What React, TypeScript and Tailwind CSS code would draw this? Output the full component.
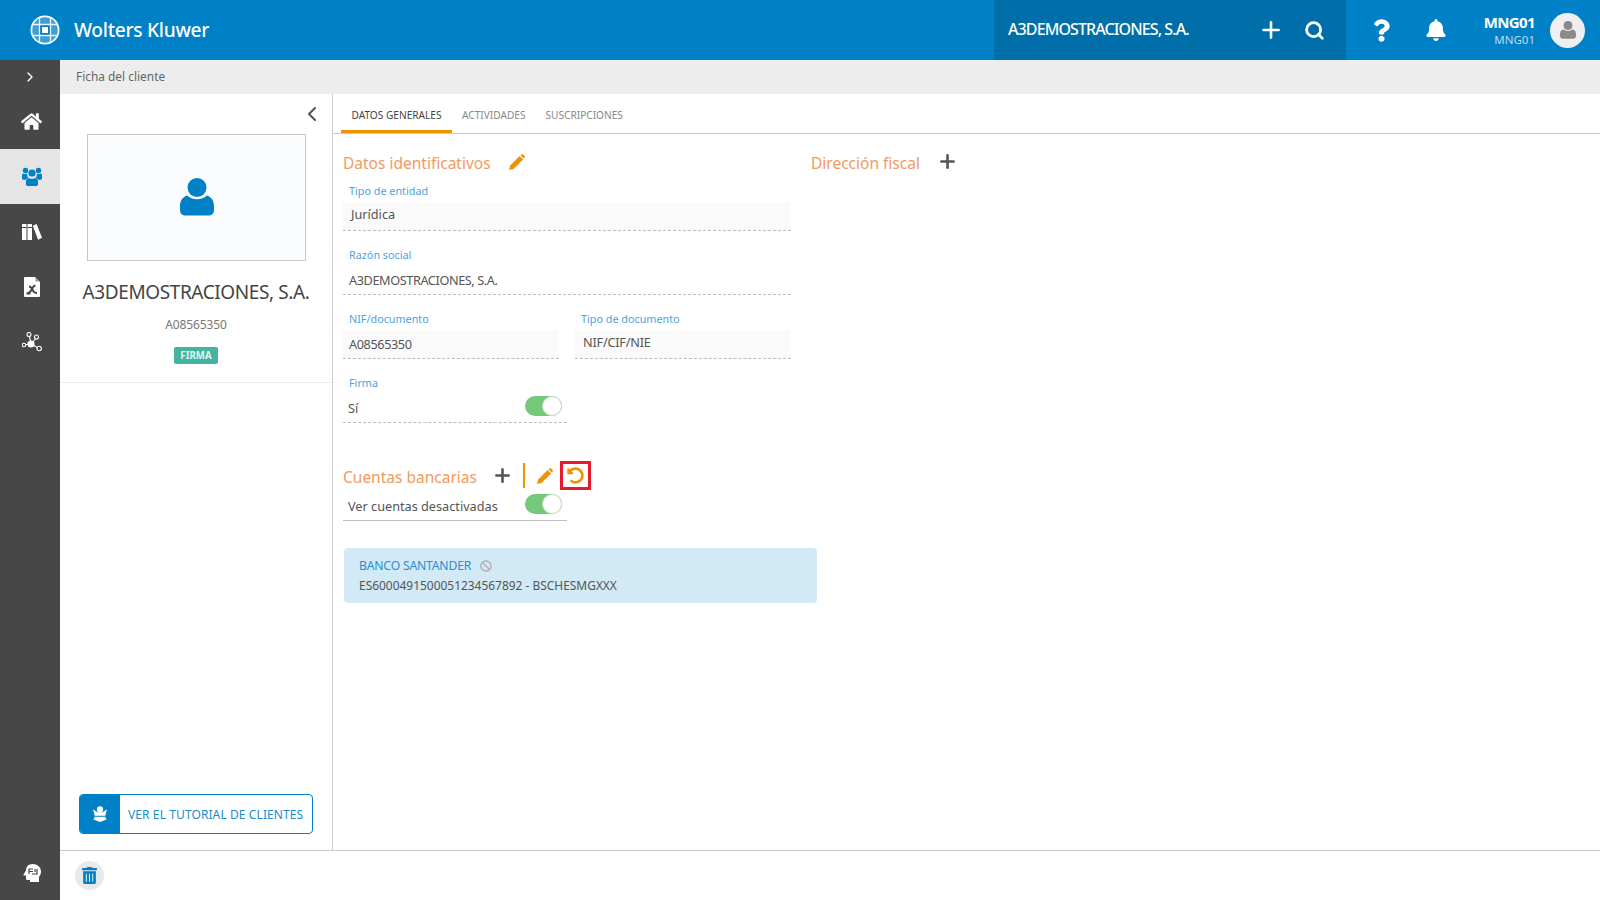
import { ChevronLeft, ChevronRight, Plus, Search } from "lucide-react";
import { FaBan, FaBell, FaHome, FaQuestion, FaTrashAlt, FaUndoAlt } from "react-icons/fa";

function UserGlyph({ className }: { className?: string }) {
  return (
    <svg viewBox="0 0 34 38" className={className} fill="currentColor">
      <circle cx="17" cy="9.5" r="9.5" />
      <path d="M7 17.5c2.5 2.4 6 3.7 10 3.7s7.500-1.300 10-3.700c4 1.300 7 4.800 7 10.500v4c0 3.300-2.200 5.500-5.500 5.500h-23C2.200 37.500 0 35.300 0 32v-4c0-5.700 3-9.200 7-10.500z" />
    </svg>
  );
}

function Logo() {
  return (
    <svg viewBox="0 0 30 30" className="h-[30px] w-[30px]">
      <circle cx="15" cy="15" r="14.500" fill="#fff" />
      <circle cx="15" cy="15" r="12.800" fill="#3d9fd6" />
      <rect x="9.500" y="9.500" width="11" height="11" fill="#0a78bb" />
      <rect x="12" y="12" width="6" height="6" fill="#fff" />
      <path d="M9.500 2v26M20.500 2v26M2 9.500h26M2 20.500h26" stroke="#e8f4fb" strokeWidth="1.300" />
    </svg>
  );
}

function UsersIcon() {
  return (
    <svg viewBox="0 0 20 19" className="h-[19px] w-[20px]" fill="#0080c6">
      <circle cx="3.500" cy="3.500" r="2.700" />
      <circle cx="16.500" cy="3.500" r="2.700" />
      <circle cx="10" cy="6" r="3.600" />
      <path d="M0 8.300c0-1 .7-1.800 1.700-1.800.9.700 2.600.700 3.500.2-.3 1.600.2 3.100 1.100 4.100-1 .3-1.800 1-2.200 1.900H1.500A1.500 1.500 0 0 1 0 11.200zM20 8.300c0-1-.7-1.800-1.700-1.800-.9.700-2.600.700-3.500.2.300 1.600-.2 3.100-1.100 4.100 1 .3 1.800 1 2.200 1.900h2.600a1.500 1.500 0 0 0 1.500-1.500z" />
      <path d="M6.700 10.900c1.800 1.200 4.800 1.200 6.600 0 1.600.4 2.700 1.800 2.700 3.500v2.800c0 1-.8 1.800-1.800 1.800H5.800c-1 0-1.800-.8-1.800-1.800v-2.800c0-1.700 1.100-3.100 2.700-3.500z" />
    </svg>
  );
}

function BooksIcon() {
  return (
    <svg viewBox="0 0 20 16" className="h-[16px] w-[20px]" fill="#fff">
      <rect x="0" y="0" width="4.500" height="16" rx="0.500" />
      <rect x="5.500" y="0" width="4.500" height="16" rx="0.500" />
      <path d="M10.800 1.800 14.600 0l5.400 13.800-3.900 2z" />
      <rect x="0" y="3" width="4.500" height="1" fill="#474747" />
      <rect x="5.500" y="3" width="4.500" height="1" fill="#474747" />
    </svg>
  );
}

function DocIcon() {
  return (
    <svg viewBox="0 0 16 20" className="h-[20px] w-[16px]">
      <path d="M1 0h10l5 5v14a1 1 0 0 1-1 1H1a1 1 0 0 1-1-1V1a1 1 0 0 1 1-1z" fill="#fff" />
      <path d="M11.500 .5 15.500 4.500h-4z" fill="#999" />
      <path d="M2.500 16.500c3 0 4.500-2 6-5.500.6-1.300 1.300-2.500 3-2.500M5 9.500c2.500 0 3.500 3.500 4.500 5 .5.800 1.500 1.500 3.500 1.500M2.500 16.500h4" fill="none" stroke="#474747" strokeWidth="2" />
    </svg>
  );
}

function NetworkIcon() {
  return (
    <svg viewBox="0 0 20 20" className="h-[20px] w-[20px]" fill="none" stroke="#fff" strokeWidth="1.100">
      <circle cx="9" cy="12" r="3" fill="#fff" />
      <circle cx="7" cy="2.500" r="2" />
      <circle cx="14.500" cy="5" r="2" />
      <circle cx="2" cy="13" r="1.800" />
      <circle cx="17.200" cy="16.500" r="2.200" />
      <path d="M7.400 4.500 8.500 9M13.400 6.700 11 10M3.800 12.800 6 12.300M11.700 13.300 15.300 15.600" />
    </svg>
  );
}

function HeadIcon() {
  return (
    <svg viewBox="0 0 18 18" className="h-[18px] w-[18px]">
      <path d="M9.500 0C5.500 0 3 2.800 3 6.500L.5 10.500c-.3.500 0 1 .5 1h2v3c0 1 .8 1.500 1.500 1.500H7v2h9v-5c1.300-1.400 2-3.300 2-5.500C18 3.300 14.500 0 9.500 0z" fill="#fff" />
      <path d="M6 10V5h4M9 10h5V5M12 5v3M6 7.500h4" fill="none" stroke="#474747" strokeWidth="1.200" />
    </svg>
  );
}

function TutorialIcon() {
  return (
    <svg viewBox="0 0 16 18" className="h-[16px] w-[14px]" fill="#fff">
      <circle cx="8" cy="3.800" r="3.600" />
      <path d="M0 3.500 5 7h6l5-3.500L14 11H2z" />
      <path d="M2 12h5.500l.5.600.5-.6H14l1.500 3.200L8 18 .5 15.200z" />
    </svg>
  );
}

function Pencil() {
  return (
    <svg viewBox="0 0 16 16" className="h-[16px] w-[16px]" fill="#f39200">
      <path d="M0 16l1.100-4.600L10.600 1.900l3.500 3.500L4.600 14.900z" />
      <path d="M12 .7c.7-.7 1.600-.7 2.200-.1l1.200 1.200c.6.600.6 1.500-.1 2.200l-.6.6-3.300-3.300z" />
    </svg>
  );
}

function Toggle() {
  return (
    <div className="flex h-[20px] w-[37px] items-center justify-end rounded-full bg-[#74c97a]">
      <div className="h-[20px] w-[20px] rounded-full border border-[#c9dfca] bg-white" />
    </div>
  );
}

function Field({ label, value, filled, width, valueClass }: { label: string; value: string; filled?: boolean; width: string; valueClass: string }) {
  return (
    <div className={width}>
      <div className="h-[16px] pl-[6px] text-[10.800px] leading-[16px] text-[#4ba3de]">{label}</div>
      <div className={`mt-[3px] h-[29px] border-b border-dashed border-[#bdbdbd] text-[#555] ${filled ? "bg-[#fafafa]" : ""} ${valueClass}`}>
        {value}
      </div>
    </div>
  );
}

const navItems = [
  { icon: <FaHome className="h-[21px] w-[21px] text-white" />, active: false },
  { icon: <UsersIcon />, active: true },
  { icon: <BooksIcon />, active: false },
  { icon: <DocIcon />, active: false },
  { icon: <NetworkIcon />, active: false },
];

export default function App() {
  return (
    <div className="flex h-screen w-full flex-col overflow-hidden bg-white font-['Noto_Sans',sans-serif]">
      {/* Header */}
      <header className="flex h-[60px] shrink-0 items-center bg-[#0080c6] text-white">
        <div className="ml-[30px]"><Logo /></div>
        <div className="ml-[14px] text-[19.200px] font-medium tracking-[-0.3px]">Wolters Kluwer</div>
        <div className="ml-auto flex h-full w-[352px] items-center bg-[#006fa9] pl-[14px]">
          <span className="mb-[2px] w-[250px] text-[16px] font-medium tracking-[-0.9px]">A3DEMOSTRACIONES, S.A.</span>
          <Plus className="h-[26px] w-[26px]" strokeWidth={2.400} />
          <Search className="ml-[20px] h-[21px] w-[21px]" strokeWidth={3.200} />
        </div>
        <FaQuestion className="ml-[27px] h-[23px] w-[17px]" />
        <FaBell className="ml-[36px] h-[22px] w-[20px]" />
        <div className="ml-[10px] w-[79px] text-right">
          <div className="mb-[1px] text-[15px] font-bold leading-[18px] tracking-[-0.6px]">MNG01</div>
          <div className="mt-[1px] text-[11.500px] leading-[16px] text-[#bfdcee]">MNG01</div>
        </div>
        <div className="ml-[15px] mr-[15px] flex h-[35px] w-[35px] items-center justify-center rounded-full bg-[#efefef]">
          <UserGlyph className="h-[18px] w-[16px] text-[#8a8a8a]" />
        </div>
      </header>

      <div className="flex min-h-0 flex-1">
        {/* Sidebar */}
        <aside className="flex w-[60px] shrink-0 flex-col bg-[#474747]">
          <div className="flex h-[34px] items-center justify-center">
            <ChevronRight className="h-[16px] w-[16px] text-white" />
          </div>
          {navItems.map((n, i) => (
            <div key={i} className={`flex h-[55px] items-center justify-center pl-[3px] ${n.active ? "bg-[#e5e5e5]" : ""}`}>
              {n.icon}
            </div>
          ))}
          <div className="mt-auto flex h-[55px] items-center justify-center pl-[3px]">
            <HeadIcon />
          </div>
        </aside>

        <div className="flex min-w-0 flex-1 flex-col">
          <div className="flex h-[34px] shrink-0 items-center bg-[#ededed] pl-[16px] text-[11.900px] text-[#666]">Ficha del cliente</div>

          <div className="flex min-h-0 flex-1">
            {/* Client panel */}
            <section className="flex w-[273px] shrink-0 flex-col border-r border-[#ccc]">
              <div className="border-b border-[#eee] pb-[18px]">
                <div className="flex h-[40px] items-center justify-end pr-[8px]">
                  <ChevronLeft className="h-[24px] w-[24px] text-[#555]" strokeWidth={2} />
                </div>
                <div className="ml-[27px] flex h-[127px] w-[219px] items-center justify-center border border-[#c8c8c8] bg-[#fbfcfe]">
                  <UserGlyph className="mb-[1px] h-[38px] w-[34px] text-[#0080c6]" />
                </div>
                <div className="mt-[17px] text-center text-[19px] leading-[28px] tracking-[-0.4px] text-[#444]">A3DEMOSTRACIONES, S.A.</div>
                <div className="mt-[10px] text-center text-[12px] leading-[18px] tracking-[-0.1px] text-[#777]">A08565350</div>
                <div className="mt-[13px] flex justify-center">
                  <span className="rounded-[2px] bg-[#44b39f] px-[6px] text-[9.700px] font-bold leading-[17px] text-[#e2f5f1]">FIRMA</span>
                </div>
              </div>
              <div className="mt-auto mb-[16px] ml-[19px] flex h-[40px] w-[234px] items-center overflow-hidden rounded-[4px] border border-[#0080c6]">
                <div className="flex h-full w-[40px] items-center justify-center bg-[#0080c6]"><TutorialIcon /></div>
                <div className="pl-[8px] pt-[1px] text-[12px] tracking-[0.1px] text-[#1a8ccb]">VER EL TUTORIAL DE CLIENTES</div>
              </div>
            </section>

            {/* Detail */}
            <section className="min-w-0 flex-1">
              <div className="flex h-[40px] border-b border-[#ccc] pl-[8px] text-[10.150px]">
                <div className="flex w-[111px] items-center justify-center border-b-[3px] border-[#f39200] pt-[7px] text-[#444]">DATOS GENERALES</div>
                <div className="ml-[10px] flex items-center border-b-[3px] border-transparent pt-[7px] text-[#888]">ACTIVIDADES</div>
                <div className="ml-[20px] flex items-center border-b-[3px] border-transparent pt-[7px] text-[#888]">SUSCRIPCIONES</div>
              </div>

              <div className="flex pl-[10px] pt-[16px]">
                <div className="w-[448px]">
                  <div className="flex h-[24px] items-center text-[15.500px] text-[#f29a5f]">
                    <span className="pt-[3px]">Datos identificativos</span>
                    <span className="ml-[18px]"><Pencil /></span>
                  </div>
                  <div className="mt-[9px]">
                    <Field label="Tipo de entidad" value="Jurídica" filled width="w-full" valueClass="pl-[8px] text-[12.700px] leading-[25px]" />
                  </div>
                  <div className="mt-[16px]">
                    <Field label="Razón social" value="A3DEMOSTRACIONES, S.A." width="w-full" valueClass="pl-[6px] text-[12.700px] tracking-[-0.4px] leading-[29px]" />
                  </div>
                  <div className="mt-[16px] flex gap-[16px]">
                    <Field label="NIF/documento" value="A08565350" filled width="w-[216px]" valueClass="pl-[6px] text-[12.700px] tracking-[-0.4px] leading-[29px]" />
                    <Field label="Tipo de documento" value="NIF/CIF/NIE" filled width="w-[216px]" valueClass="pl-[8px] text-[12.700px] tracking-[-0.2px] leading-[25px]" />
                  </div>
                  <div className="mt-[16px] w-[224px]">
                    <div className="h-[16px] pl-[6px] text-[10.800px] leading-[16px] text-[#4ba3de]">Firma</div>
                    <div className="flex h-[32px] items-start justify-between border-b border-dashed border-[#bdbdbd] px-[5px] text-[12.700px] leading-[35px] text-[#555]">
                      Sí
                      <div className="mt-[5px]"><Toggle /></div>
                    </div>
                  </div>

                  <div className="mt-[38px] flex h-[29px] items-center text-[15.500px] text-[#f29a5f]">
                    <span className="pt-[5px]">Cuentas bancarias</span>
                    <Plus className="mb-[1px] ml-[15px] h-[21px] w-[21px] text-[#555]" strokeWidth={3} />
                    <div className="ml-[10px] h-[25px] w-[2px] bg-[#f39200]" />
                    <span className="ml-[12px]"><Pencil /></span>
                    <div className="ml-[7px] flex h-[29px] w-[31px] items-center justify-center border-[3px] border-[#e8192c]">
                      <FaUndoAlt className="h-[17px] w-[17px] text-[#f39200]" />
                    </div>
                  </div>
                  <div className="mt-[1px] flex h-[30px] w-[224px] items-start justify-between border-b border-[#bdbdbd] px-[5px] text-[12.700px] leading-[31px] text-[#555]">
                    Ver cuentas desactivadas
                    <div className="mt-[3px]"><Toggle /></div>
                  </div>
                  <div className="mt-[27px] ml-[1px] h-[55px] w-[473px] rounded-[4px] bg-[#d2e9f6] pl-[15px] pt-[8px]">
                    <div className="flex h-[20px] items-center text-[12.200px] tracking-[-0.2px] text-[#2b8fd0]">
                      BANCO SANTANDER
                      <FaBan className="ml-[9px] h-[12px] w-[12px] text-[#b4b4b4]" />
                    </div>
                    <div className="h-[20px] text-[11.950px] leading-[20px] text-[#555]">ES6000491500051234567892 - BSCHESMGXXX</div>
                  </div>
                </div>

                <div className="ml-[20px] flex h-[24px] items-center text-[15.500px] text-[#f29a5f]">
                  <span className="pt-[3px]">Dirección fiscal</span>
                  <Plus className="ml-[17px] mb-[2px] h-[21px] w-[21px] text-[#555]" strokeWidth={3} />
                </div>
              </div>
            </section>
          </div>

          {/* Footer */}
          <div className="flex h-[50px] shrink-0 items-center border-t border-[#ccc] pl-[15px]">
            <div className="flex h-[29px] w-[29px] items-center justify-center rounded-full bg-[#e9e9e9]">
              <FaTrashAlt className="h-[17px] w-[15px] text-[#0080c6]" />
            </div>
          </div>
        </div>
      </div>
    </div>
  );
}
